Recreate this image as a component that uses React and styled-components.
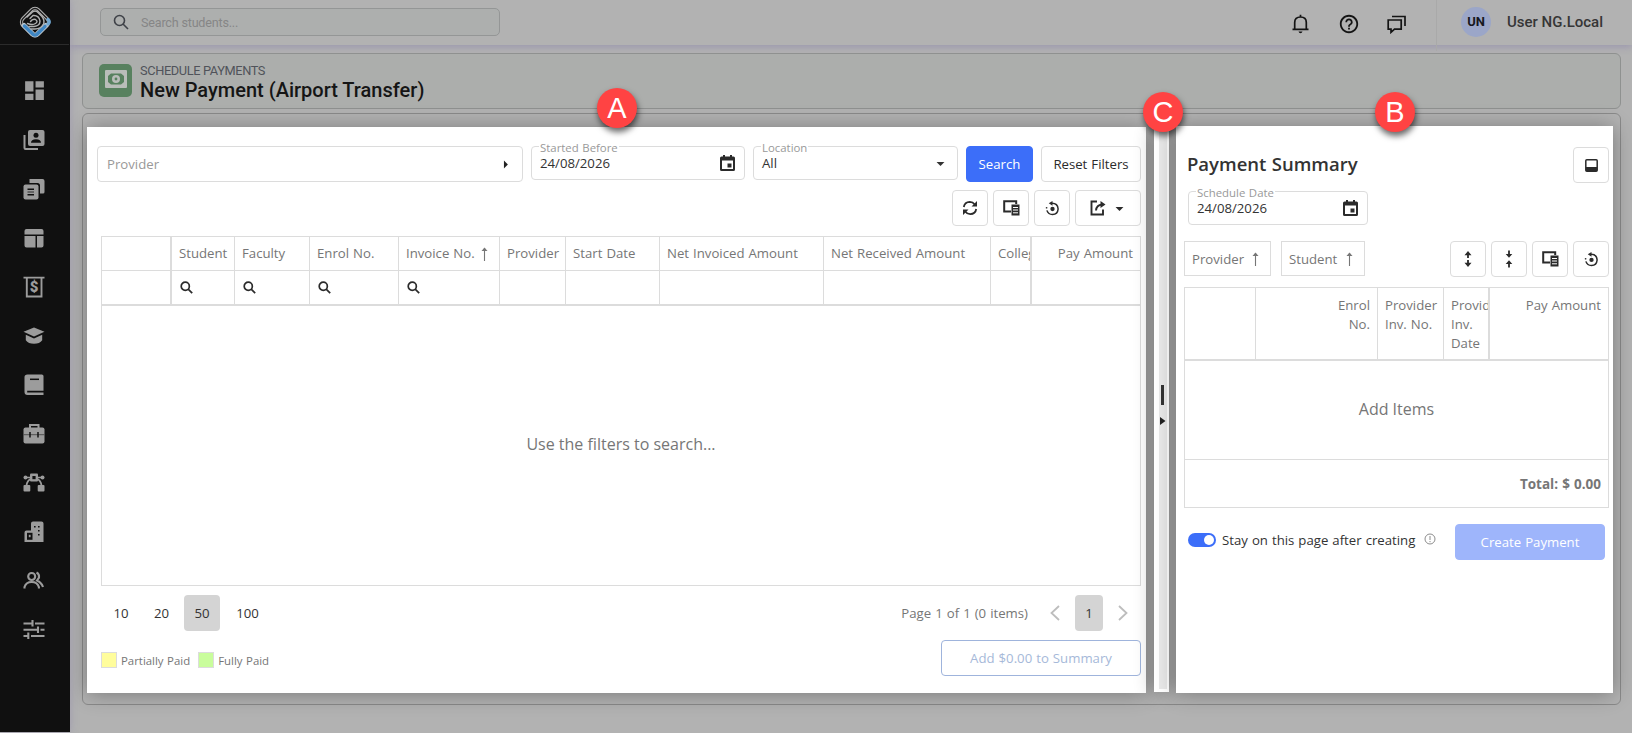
import React, { useState } from 'react';
import styled, { createGlobalStyle } from 'styled-components';
import { MdDashboard, MdArrowDropDown, MdArrowRight, MdHelpOutline } from 'react-icons/md';

const palette = {
    line: '#dcdcdc',
    text: '#333',
    gray: '#767676',
    label: '#999',
    blue: '#3c6ef9',
    dimBlue: '#9eb5fb',
    page: '#b2b2b2',
    dimLine: '#8f9190',
};

const GlobalStyle = createGlobalStyle`
    * {
        box-sizing: border-box;
    }
    body {
        margin: 0;
        background: ${palette.page};
        font-family: 'Open Sans', 'Noto Sans', sans-serif;
        font-size: 13.2px;
        word-spacing: 0.6px;
        color: ${palette.text};
    }
    button {
        font: inherit;
        color: inherit;
        word-spacing: inherit;
        padding: 0;
    }
    svg {
        display: block;
        flex: none;
    }
`;

const Page = styled.div`
    position: relative;
    display: flex;
    width: 1632px;
    height: 733px;
    overflow: hidden;
`;

/* sidebar */

const Sidebar = styled.nav`
    width: 70px;
    height: 732px;
    background: #101010;
    color: #9c9c9c;
    flex: none;
    position: relative;
    z-index: 1;
    box-shadow: 0 0 8px rgba(120, 110, 170, 0.35);
`;

const LogoBox = styled.div`
    width: 69px;
    height: 45px;
    display: flex;
    justify-content: center;
    border-bottom: 1px solid #2b2b2b;
    padding-top: 5px;
`;

const SideList = styled.div`
    display: flex;
    flex-direction: column;
    align-items: center;
    padding: 21px 2px 0 0;
`;

const SideItem = styled.a`
    height: 49px;
    display: flex;
    align-items: center;
`;

/* header */

const Main = styled.div`
    flex: 1;
    min-width: 0;
`;

const Header = styled.header`
    height: 45px;
    display: flex;
    align-items: flex-start;
    font-family: Roboto, sans-serif;
    word-spacing: normal;
    box-shadow: 0 2px 7px rgba(120, 110, 170, 0.4);
    background: ${palette.page};
`;

const SearchBox = styled.div`
    width: 400px;
    height: 28px;
    margin: 8px 0 0 30px;
    padding-left: 12px;
    border: 1px solid #949696;
    border-radius: 5px;
    background: #adafae;
    display: flex;
    align-items: center;
    gap: 12px;
    font-size: 12.6px;
    letter-spacing: -0.2px;
    color: #868686;
    svg {
        color: #3f4248;
    }
`;

const HeaderIcons = styled.div`
    margin-left: auto;
    height: 48px;
    width: 145px;
    display: flex;
    align-items: center;
    justify-content: space-between;
    padding-right: 30px;
    color: #141414;
`;

const UserBox = styled.div`
    width: 196px;
    height: 51px;
    border-left: 1px solid #a9a9a9;
    display: flex;
    align-items: flex-start;
    padding: 7px 0 0 24px;
    font-size: 15px;
    font-weight: 500;
    line-height: 30px;
    color: #363636;
`;

const Avatar = styled.div`
    width: 30px;
    height: 30px;
    border-radius: 50%;
    background: #9ba6c8;
    color: #16181f;
    font-size: 13px;
    font-weight: 700;
    text-align: center;
    margin-right: 16px;
`;

/* page title */

const TitleCard = styled.section`
    margin: 8px 11px 0 12px;
    height: 56px;
    border: 1px solid ${palette.dimLine};
    border-radius: 6px;
    background: #acaeac;
    display: flex;
    padding: 10px 0 0 16px;
    font-family: Roboto, sans-serif;
    word-spacing: normal;
`;

const TitleIcon = styled.div`
    width: 33px;
    height: 33px;
    border-radius: 5px;
    background: #58815f;
    padding: 6px;
    margin-right: 8px;
`;

const TitleText = styled.div`
    .section-name {
        font-size: 12.8px;
        line-height: 14px;
        letter-spacing: -0.38px;
        color: #50535a;
    }
    h1 {
        margin: 0;
        font-size: 20px;
        line-height: 24px;
        font-weight: 500;
        color: #151515;
    }
`;

/* workspace */

const Workspace = styled.section`
    margin: 4px 11px 0 12px;
    height: 592px;
    border: 1px solid #8a8a8a;
    border-radius: 6px;
    display: flex;
    align-items: flex-start;
    padding: 13px 0 0 4px;
`;

const Panel = styled.div`
    width: ${({ $width }) => $width}px;
    background: #fff;
    box-shadow: 0 1px 20px rgba(0, 0, 0, 0.32);
`;

const SearchPanel = styled(Panel)`
    height: 566px;
    padding: 19px 5px 0 10px;
`;

const SummaryPanel = styled(Panel)`
    height: 567px;
    margin-top: -1px;
    padding: 21px 4px 0 8px;
`;

const Splitter = styled.div`
    width: 15px;
    height: 565px;
    margin: 0 7px 0 8px;
    border: solid #fff;
    border-width: 0 2px 3px 5px;
    background: #e9e9e9;
    box-shadow: 0 1px 20px rgba(0, 0, 0, 0.32);
    display: flex;
    flex-direction: column;
    align-items: center;
    justify-content: center;
    gap: 12px;
    padding: 0 1px 6px 0;
    color: #222;
    span {
        width: 3px;
        height: 20px;
        background: #333;
    }
`;

const Row = styled.div`
    display: flex;
    align-items: flex-start;
    gap: ${({ $gap = 0 }) => $gap}px;
    justify-content: ${({ $justify = 'flex-start' }) => $justify};
`;

const Field = styled.div`
    width: ${({ $width }) => $width}px;
    height: ${({ $tall }) => ($tall ? 36 : 34)}px;
    border: 1px solid ${palette.line};
    border-radius: 4px;
    display: flex;
    align-items: center;
    justify-content: space-between;
    padding: ${({ $tall }) => ($tall ? '0 7px 0 9px' : '0 9px 0 8px')};
    position: relative;
    color: ${({ $tall }) => ($tall ? palette.label : palette.text)};
    label {
        position: absolute;
        top: -6px;
        left: 7px;
        padding: 0 1px;
        background: #fff;
        font-size: 11.4px;
        line-height: 14px;
        color: ${palette.label};
    }
`;

const Caret = styled(MdArrowDropDown)`
    margin-right: -2px;
`;

const Button = styled.button`
    width: ${({ $width = 36 }) => $width}px;
    height: 36px;
    border: 1px solid ${({ $border = palette.line }) => $border};
    border-radius: 4px;
    background: ${({ $fill = '#fff' }) => $fill};
    color: ${({ $color = '#2b2b2b' }) => $color};
    display: flex;
    align-items: center;
    justify-content: center;
    gap: 4px;
`;

const Toolbar = styled(Row)`
    gap: 5px;
    justify-content: flex-end;
`;

const SearchToolbar = styled(Toolbar)`
    margin-top: 8px;
`;

const Grid = styled.div`
    border: 1px solid ${palette.line};
    color: ${palette.gray};
`;

const SearchGrid = styled(Grid)`
    margin: 10px 0 0 4px;
`;

const GridRow = styled.div`
    display: grid;
    grid-template-columns: ${({ $columns }) => $columns};
    height: ${({ $height }) => $height}px;
    border-bottom: ${({ $thick }) => ($thick ? 2 : 1)}px solid ${palette.line};
`;

const Cell = styled.div`
    border-right: ${({ $fixed }) => ($fixed ? 2 : 1)}px solid ${palette.line};
    padding: 0 7px;
    overflow: hidden;
    white-space: nowrap;
    line-height: 33px;
    display: flex;
    align-items: center;
    justify-content: ${({ $right }) => ($right ? 'flex-end' : 'flex-start')};
    gap: 6px;
    &:last-child {
        border-right: 0;
    }
`;

const TallCell = styled(Cell)`
    align-items: flex-start;
    padding-top: 8px;
    line-height: 19px;
    white-space: pre;
    text-align: ${({ $right }) => ($right ? 'right' : 'left')};
`;

const SearchLens = styled.span`
    margin-left: 1px;
    color: #2b2b2b;
`;

const EmptyText = styled.div`
    height: ${({ $height }) => $height}px;
    display: flex;
    align-items: center;
    justify-content: center;
    padding-bottom: 3px;
    font-size: 16px;
    word-spacing: 0;
    color: ${palette.gray};
`;

const TotalRow = styled.div`
    height: 48px;
    border-top: 1px solid ${palette.line};
    display: flex;
    align-items: center;
    justify-content: flex-end;
    padding-right: 7px;
    font-size: 13.5px;
    font-weight: 700;
`;

const Pager = styled.div`
    margin: 9px 0;
    height: 36px;
    display: flex;
    align-items: center;
    color: ${palette.gray};
    .info {
        margin: 0 22px 0 auto;
    }
    .arrow {
        color: #bdbdbd;
    }
`;

const PagerSizes = styled.div`
    display: flex;
    gap: 4.5px;
    padding-left: 6px;
`;

const PagerArrows = styled.div`
    display: flex;
    align-items: center;
    gap: 15px;
    padding-right: 13px;
`;

const PageButton = styled.button`
    min-width: ${({ $width }) => $width}px;
    height: 36px;
    border: 0;
    border-radius: 4px;
    background: ${({ $active }) => ($active ? '#d4d4d4' : 'transparent')};
    color: ${palette.text};
`;

const Legend = styled.div`
    display: flex;
    align-items: center;
    height: 40px;
    padding-left: 4px;
    font-size: 11.4px;
    color: ${palette.gray};
`;

const Swatch = styled.span`
    width: 16px;
    height: 16px;
    border: 1px solid ${palette.line};
    background: ${({ $color }) => $color};
    margin-right: 4px;
`;

const LegendText = styled.span`
    margin-right: 8px;
`;

const SummaryHead = styled.div`
    display: flex;
    justify-content: space-between;
    height: 44px;
`;

const SummaryTitle = styled.h2`
    margin: 0;
    font-size: 18.5px;
    font-weight: 600;
    line-height: 34px;
    padding-left: 3px;
`;

const DateRow = styled.div`
    height: 50px;
    padding-left: 4px;
`;

const ChipRow = styled.div`
    display: flex;
    justify-content: space-between;
    height: 46px;
`;

const Chip = styled.div`
    width: ${({ $width }) => $width}px;
    height: 35px;
    border: 1px solid ${palette.line};
    display: flex;
    align-items: center;
    justify-content: space-between;
    padding: 0 11px 0 7px;
    color: ${palette.gray};
`;

const SummaryFooter = styled.div`
    display: flex;
    justify-content: space-between;
    padding: 16px 4px 0 4px;
`;

const Toggle = styled.button`
    width: 28px;
    height: 14px;
    border: 0;
    border-radius: 7px;
    background: ${({ $on }) => ($on ? palette.blue : '#ccc')};
    display: flex;
    align-items: center;
    justify-content: ${({ $on }) => ($on ? 'flex-end' : 'flex-start')};
    padding: 0 2px;
    margin-right: 6px;
    &::after {
        content: '';
        width: 10px;
        height: 10px;
        border-radius: 50%;
        background: #fff;
    }
`;

const StayRow = styled.div`
    display: flex;
    align-items: center;
    height: 32px;
    svg {
        margin: -2px 0 0 9px;
    }
`;

const Marker = styled.div`
    position: absolute;
    z-index: 2;
    left: ${({ $x }) => $x - 20}px;
    top: ${({ $y }) => $y - 20}px;
    width: 40px;
    height: 40px;
    border-radius: 50%;
    background: #ff4343;
    color: #fff;
    font-family: 'Liberation Sans', Arial, sans-serif;
    font-size: 29px;
    line-height: 41px;
    text-align: center;
    box-shadow: 1px 4px 6px rgba(0, 0, 0, 0.6);
`;

/* icons */

const Logo = () => (
    <svg width="34" height="34" viewBox="0 0 34 34" fill="none" strokeLinecap="round" strokeLinejoin="round">
        <rect x="6" y="6" width="22" height="22" rx="5" transform="rotate(45 17 17)" stroke="#b4b4b4" strokeWidth="3.4" />
        <rect x="6" y="6" width="22" height="22" rx="5" transform="rotate(45 17 17)" stroke="#1b1b1b" strokeWidth="1.3" />
        <path d="M6 20.500l8.800 8.600q2.200 1.800 4.400 0l8.800-8.800" stroke="#b9c3cb" strokeWidth="5" />
        <path d="M6.500 21l8.500 8.300q2 1.500 4 0l8-8" stroke="#3f87c4" strokeWidth="3.4" />
        <path d="M30 19q2.500-2 0-4.500" stroke="#6fa6d0" strokeWidth="3.4" />
        <path d="M9 12l6-5.500q2-1 4 0l5 5q3 4 1.500 7.500q-2.500 5-8.500 5h-4" stroke="#b0b0b0" strokeWidth="1.5" />
        <path d="M12 13.500l3-3q6-.500 7 5.500q0 5-6 5.500h-5" stroke="#b0b0b0" strokeWidth="1.4" />
        <path d="M12.500 16.500q2-3 5-2q3 2 0 4q-3 2-8 0" stroke="#b0b0b0" strokeWidth="1.4" />
    </svg>
);

const SideSvg = ({ children }) => (
    <svg width="22" height="22" viewBox="0 0 22 22" fill="currentColor">{children}</svg>
);

const ContactsIcon = () => (
    <SideSvg>
        <rect x="5" y="1" width="16.500" height="16" rx="2" />
        <path d="M.500 6V19q0 2 2 2h12.500v-2H2.500V6z" />
        <circle cx="13" cy="6.300" r="2.500" fill="#101010" />
        <path d="M8 13.800q0-3.600 5-3.600t5 3.600z" fill="#101010" />
    </SideSvg>
);

const DocumentsIcon = () => (
    <SideSvg>
        <path d="M6.500 1h13q2 0 2 2v11q0 1.500-1.500 1.500H17V7.500q0-2.500-2.500-2.500h-8z" />
        <rect x=".500" y="6.500" width="15" height="15" rx="2" />
        <path d="M4.500 11.300h6.500M4.500 16.800h6.500" stroke="#101010" strokeWidth="1.500" />
        <path d="M4.500 14h6.500" stroke="#101010" strokeWidth=".8" />
    </SideSvg>
);

const LayoutIcon = () => (
    <SideSvg>
        <path d="M1.500 7.500V4q0-2 2-2h15q2 0 2 2v3.500zM1.500 9h11v11.500h-9q-2 0-2-2zM14 9h6.500v9.500q0 2-2 2H14z" />
    </SideSvg>
);

const InvoiceIcon = () => (
    <SideSvg>
        <path d="M.500 1.600h21M3.800 2v18.500h14.700V2" fill="none" stroke="currentColor" strokeWidth="1.900" />
        <text x="11" y="16.300" fontFamily="Roboto, sans-serif" fontSize="15" fontWeight="900" textAnchor="middle">$</text>
    </SideSvg>
);

const CapIcon = () => (
    <SideSvg>
        <path d="M11 2.500l10.500 4.300L11 11.500 .500 6.800z" />
        <path d="M2.800 9.800l8.200 3.600 8.200-3.600v5.500q-2.500 3.500-8.200 3.500t-8.200-3.500z" />
    </SideSvg>
);

const BookIcon = () => (
    <SideSvg>
        <path d="M4.500 .500h14.300Q20.500 .500 20.500 2v14.800H4.200v1.600h16.300V21h-16Q1.500 21 1.500 18V3Q1.500 .500 4.500 .500z" />
        <path d="M7 5.300h9" stroke="#101010" strokeWidth="1.500" />
    </SideSvg>
);

const BriefcaseIcon = () => (
    <SideSvg>
        <path d="M7 5V2h8.500v3" fill="none" stroke="currentColor" strokeWidth="2" />
        <rect x=".500" y="4.500" width="21" height="16" rx="2" />
        <path d="M.500 11.700h21" stroke="#4a4a4a" strokeWidth=".9" />
        <path d="M7 9v5.500M15 9v5.500" stroke="#101010" strokeWidth="1.500" />
    </SideSvg>
);

const NodesIcon = () => (
    <SideSvg>
        <path d="M1.500 5.500h19" stroke="currentColor" strokeWidth="1.500" />
        <path d="M8.500 6.500q-4.500 2-5 7M13.500 6.500q4.500 2 5 7" fill="none" stroke="currentColor" strokeWidth="1.800" />
        <rect x="7" y="1.500" width="8" height="8" rx="1" />
        <path d="M9.400 4h3.200v3.200H9.400z" fill="#101010" />
        <circle cx="2.500" cy="5.500" r="2" />
        <circle cx="19.500" cy="5.500" r="2" />
        <rect x=".500" y="13" width="6.800" height="6.500" rx="1" />
        <rect x="14.700" y="13" width="6.800" height="6.500" rx="1" />
    </SideSvg>
);

const BuildingIcon = () => (
    <SideSvg>
        <path d="M8 2.500Q8 .500 10 .500h8.500q2 0 2 2V21h-19v-9.500Q1.500 9.500 3.500 9.500H8z" />
        <path d="M4 11.800h5.500v7H4z" fill="#101010" />
        <rect x="5.800" y="13.800" width="1.800" height="2.400" />
        <path d="M11 5h1.600v1.600H11zM15 5h1.600v1.600H15zM15 9h1.600v1.600H15zM15 13h1.600v1.600H15z" fill="#101010" />
    </SideSvg>
);

const PeopleIcon = () => (
    <svg width="22" height="22" viewBox="0 0 22 22" fill="none" stroke="currentColor" strokeWidth="2.1">
        <circle cx="8.700" cy="6.500" r="3.500" />
        <path d="M1.500 18.500v-1.500q1.500-5 7.200-5t7.200 5v1.500M13.500 2.500q3 1.500 2.500 5l-2 3q4.500 2 6 6.500" />
    </svg>
);

const TuneIcon = () => (
    <svg width="22" height="22" viewBox="0 0 22 22" fill="none" stroke="currentColor" strokeWidth="2.1">
        <path d="M.500 4.500h9M9.500 1v6.500M12 4.500h9.500M.500 10.700h14M15 7.500v6.500M17.500 10.700h4M.500 17h5M5.300 13.500V20M8 17h13.500" />
    </svg>
);

const CashIcon = () => (
    <svg width="22" height="18" viewBox="0 0 22 18">
        <rect width="22" height="18" rx="1" fill="#b9bdb9" />
        <path d="M6 3.500h10l3 2.500v6l-3 2.500H6L3 12V6z" fill="#58815f" />
        <circle cx="11" cy="9" r="4" fill="#b9bdb9" />
        <circle cx="11" cy="9" r="1.400" fill="#58815f" />
    </svg>
);

const SearchIcon = ({ size, width = 2 }) => (
    <svg width={size} height={size} viewBox="0 0 16 16" fill="none" stroke="currentColor" strokeWidth={width}>
        <circle cx="6.500" cy="6.500" r="5" />
        <path d="M10 10l5 5" />
    </svg>
);

const BellIcon = () => (
    <svg width="19" height="20" viewBox="0 0 19 20" fill="none" stroke="currentColor" strokeWidth="1.700">
        <path d="M1.500 15.300h16M3.700 15V8.500q0-5.500 5.800-5.500t5.800 5.500V15M9.500 .800V3" />
        <path d="M7.500 17.500h4q-.500 1.700-2 1.700t-2-1.700z" fill="currentColor" stroke="none" />
    </svg>
);

const ChatIcon = () => (
    <svg width="19" height="19" viewBox="0 0 19 19" fill="none" stroke="currentColor" strokeWidth="1.700">
        <path d="M1.200 5h13v9.200H7.500L4 17.300v-3.100H1.200zM5 1.500h13v9.500" />
    </svg>
);

const CalendarIcon = () => (
    <svg width="15" height="16" viewBox="0 0 15 16">
        <path d="M1.500 1.500H3V0h2v1.500h5V0h2v1.500h1.500Q15 1.500 15 3v11.500q0 1.500-1.500 1.500h-12Q0 16 0 14.500V3q0-1.500 1.500-1.500zM2 5.500V14h11V5.500z" fill="#2b2b2b" fillRule="evenodd" />
        <rect x="7.500" y="8.500" width="4" height="4" fill="#2b2b2b" />
    </svg>
);

const RefreshIcon = () => (
    <svg width="16" height="16" viewBox="0 0 16 16">
        <path d="M1.800 7q.800-5 6-5.200 3 0 5 2.700M14.200 9q-.800 5-6 5.200-3 0-5-2.700" fill="none" stroke="currentColor" strokeWidth="1.800" />
        <path d="M15 1v5.500H9.500zM1 15V9.500h5.500z" fill="currentColor" />
    </svg>
);

const ColumnsIcon = () => (
    <svg width="17" height="16" viewBox="0 0 17 16">
        <path d="M8 11.500H1.200V1.200h12V4" fill="none" stroke="currentColor" strokeWidth="2" />
        <path d="M8.500 4.500H13l3.500 0V15.500h-8z" fill="currentColor" />
        <path d="M10 7.500h5M10 10h5M10 12.800h5" stroke="#fff" />
    </svg>
);

const ResetIcon = () => (
    <svg width="15" height="15" viewBox="0 0 16 16">
        <path d="M6.500 2.500q7-.500 7.500 6-.500 5.800-6 6-4.500-.200-6-4.500" fill="none" stroke="currentColor" strokeWidth="1.600" />
        <path d="M4 2.500L8 0v5z" fill="currentColor" />
        <circle cx="8" cy="8.500" r="2.300" fill="currentColor" />
        <circle cx="1.700" cy="7.200" r=".9" fill="currentColor" />
    </svg>
);

const ExportIcon = () => (
    <svg width="16" height="16" viewBox="0 0 16 16" fill="none" stroke="currentColor" strokeWidth="1.900">
        <path d="M7 1.500H1.500V14.500H13V9.500M6 10.500q.500-5.500 6-6" />
        <path d="M10.500 1L15.500 4.500l-5 3.500z" fill="currentColor" stroke="none" />
    </svg>
);

const ExpandIcon = ({ collapse }) => (
    <svg width="8" height="18" viewBox="0 0 8 18" stroke="currentColor" strokeWidth="1.800" fill="currentColor">
        {collapse ? (
            <>
                <path d="M4 .500v4M4 17.500v-4" />
                <path d="M.700 4h6.600L4 7.800zM.700 14h6.600L4 10.200z" stroke="none" />
            </>
        ) : (
            <>
                <path d="M4 4v4M4 14v-4" />
                <path d="M.500 5.300h7L4 1zM.500 12.700h7L4 17z" stroke="none" />
            </>
        )}
    </svg>
);

const DockIcon = () => (
    <svg width="13" height="13" viewBox="0 0 13 13">
        <rect x=".8" y=".8" width="11.400" height="11.400" rx="1" fill="none" stroke="currentColor" strokeWidth="1.500" />
        <path d="M1 8h11v4H1z" fill="currentColor" />
    </svg>
);

const SortIcon = () => (
    <svg width="7" height="14" viewBox="0 0 7 14">
        <path d="M3.500 1v13" stroke="currentColor" strokeWidth="1.100" />
        <path d="M.500 4L3.500 .500 6.500 4z" fill="currentColor" />
    </svg>
);

const Chevron = ({ right }) => (
    <svg className="arrow" width="10" height="16" viewBox="0 0 10 16" fill="none" stroke="currentColor" strokeWidth="1.800">
        <path d={right ? 'M1 1l7.500 7L1 15' : 'M9 1L1.500 8 9 15'} />
    </svg>
);

const InfoIcon = () => (
    <svg width="12" height="12" viewBox="0 0 12 12" fill="none" stroke="#8c8c8c">
        <circle cx="6" cy="6" r="5" />
        <path d="M6 3v4M6 8v1.200" />
    </svg>
);

const sideIcons = [
    () => <MdDashboard size={25} />,
    ContactsIcon,
    DocumentsIcon,
    LayoutIcon,
    InvoiceIcon,
    CapIcon,
    BookIcon,
    BriefcaseIcon,
    NodesIcon,
    BuildingIcon,
    PeopleIcon,
    TuneIcon,
];

const columns = [
    { width: 70, fixed: true },
    { name: 'Student', width: 63, search: true },
    { name: 'Faculty', width: 75, search: true },
    { name: 'Enrol No.', width: 89, search: true },
    { name: 'Invoice No.', width: 101, search: true, sorted: true },
    { name: 'Provider', width: 66 },
    { name: 'Start Date', width: 94 },
    { name: 'Net Invoiced Amount', width: 164 },
    { name: 'Net Received Amount', width: 167 },
    { name: 'College', width: 41, fixed: true },
    { name: 'Pay Amount', width: 108, right: true },
];

const summaryColumns = [
    { name: '', width: 71 },
    { name: 'Enrol\nNo.', width: 122, right: true },
    { name: 'Provider\nInv. No.', width: 66 },
    { name: 'Provider\nInv.\nDate', width: 46, fixed: true },
    { name: 'Pay Amount', width: 118, right: true },
];

const template = (list) => list.map((col) => `${col.width}px`).join(' ');

const pageSizes = [
    { size: 10, width: 36 },
    { size: 20, width: 36 },
    { size: 50, width: 36 },
    { size: 100, width: 46 },
];

const PaymentSearch = () => {

    const [pageSize, setPageSize] = useState(50);

    return (
        <SearchPanel $width={1059}>
            <Row $gap={8}>
                <Field $width={426} $tall>Provider<MdArrowRight size={19} color="#222" /></Field>
                <Field $width={214}><label>Started Before</label>24/08/2026<CalendarIcon /></Field>
                <Field $width={205}><label>Location</label>All<Caret size={19} /></Field>
                <Button $width={67} $fill={palette.blue} $border={palette.blue} $color="#fff">Search</Button>
                <Button $width={100}>Reset Filters</Button>
            </Row>
            <SearchToolbar>
                <Button><RefreshIcon /></Button>
                <Button><ColumnsIcon /></Button>
                <Button><ResetIcon /></Button>
                <Button $width={66}><ExportIcon /><Caret size={19} /></Button>
            </SearchToolbar>
            <SearchGrid>
                <GridRow $columns={template(columns)} $height={34}>
                    {columns.map((col, index) => (
                        <Cell key={index} $fixed={col.fixed} $right={col.right}>
                            {col.name}{col.sorted && <SortIcon />}
                        </Cell>
                    ))}
                </GridRow>
                <GridRow $columns={template(columns)} $height={35} $thick>
                    {columns.map((col, index) => (
                        <Cell key={index} $fixed={col.fixed}>
                            {col.search && <SearchLens><SearchIcon size={13} width={2.1} /></SearchLens>}
                        </Cell>
                    ))}
                </GridRow>
                <EmptyText $height={279}>Use the filters to search...</EmptyText>
            </SearchGrid>
            <Pager>
                <PagerSizes>
                    {pageSizes.map(({ size, width }) => (
                        <PageButton key={size} $width={width} $active={size === pageSize} onClick={() => setPageSize(size)}>
                            {size}
                        </PageButton>
                    ))}
                </PagerSizes>
                <span className="info">Page 1 of 1 (0 items)</span>
                <PagerArrows>
                    <Chevron />
                    <PageButton $width={28} $active>1</PageButton>
                    <Chevron right />
                </PagerArrows>
            </Pager>
            <Row $justify="space-between">
                <Legend>
                    <Swatch $color="#fffd9c" /><LegendText>Partially Paid</LegendText>
                    <Swatch $color="#c9fd9c" /><LegendText>Fully Paid</LegendText>
                </Legend>
                <Button $width={200} $border="#9fb4dc" $color="#a6b9d9">Add $0.00 to Summary</Button>
            </Row>
        </SearchPanel>
    );
};

const PaymentSummary = () => {

    const [stay, setStay] = useState(true);

    return (
        <SummaryPanel $width={437}>
            <SummaryHead>
                <SummaryTitle>Payment Summary</SummaryTitle>
                <Button><DockIcon /></Button>
            </SummaryHead>
            <DateRow>
                <Field $width={180}><label>Schedule Date</label>24/08/2026<CalendarIcon /></Field>
            </DateRow>
            <ChipRow>
                <Row $gap={10}>
                    <Chip $width={87}>Provider<SortIcon /></Chip>
                    <Chip $width={84}>Student<SortIcon /></Chip>
                </Row>
                <Toolbar>
                    <Button><ExpandIcon /></Button>
                    <Button><ExpandIcon collapse /></Button>
                    <Button><ColumnsIcon /></Button>
                    <Button><ResetIcon /></Button>
                </Toolbar>
            </ChipRow>
            <Grid>
                <GridRow $columns={template(summaryColumns)} $height={73} $thick>
                    {summaryColumns.map((col, index) => (
                        <TallCell key={index} $fixed={col.fixed} $right={col.right}>{col.name}</TallCell>
                    ))}
                </GridRow>
                <EmptyText $height={98}>Add Items</EmptyText>
                <TotalRow>Total: $ 0.00</TotalRow>
            </Grid>
            <SummaryFooter>
                <StayRow>
                    <Toggle $on={stay} onClick={() => setStay(!stay)} />
                    Stay on this page after creating
                    <InfoIcon />
                </StayRow>
                <Button $width={150} $fill={palette.dimBlue} $border={palette.dimBlue} $color="#fff">Create Payment</Button>
            </SummaryFooter>
        </SummaryPanel>
    );
};

const App = () => {
    return (
        <Page>
            <GlobalStyle />
            <Sidebar>
                <LogoBox><Logo /></LogoBox>
                <SideList>
                    {sideIcons.map((Icon, index) => (
                        <SideItem key={index}><Icon /></SideItem>
                    ))}
                </SideList>
            </Sidebar>
            <Main>
                <Header>
                    <SearchBox><SearchIcon size={16} width={1.6} />Search students...</SearchBox>
                    <HeaderIcons>
                        <BellIcon />
                        <MdHelpOutline size={22} />
                        <ChatIcon />
                    </HeaderIcons>
                    <UserBox><Avatar>UN</Avatar>User NG.Local</UserBox>
                </Header>
                <TitleCard>
                    <TitleIcon><CashIcon /></TitleIcon>
                    <TitleText>
                        <div className="section-name">SCHEDULE PAYMENTS</div>
                        <h1>New Payment (Airport Transfer)</h1>
                    </TitleText>
                </TitleCard>
                <Workspace>
                    <PaymentSearch />
                    <Splitter>
                        <span />
                        <svg width="6" height="8" viewBox="0 0 6 8"><path d="M0 0l5.500 4L0 8z" fill="currentColor" /></svg>
                    </Splitter>
                    <PaymentSummary />
                </Workspace>
            </Main>
            <Marker $x={617} $y={108}>A</Marker>
            <Marker $x={1163} $y={112}>C</Marker>
            <Marker $x={1395} $y={112}>B</Marker>
        </Page>
    );
};

export default App;
